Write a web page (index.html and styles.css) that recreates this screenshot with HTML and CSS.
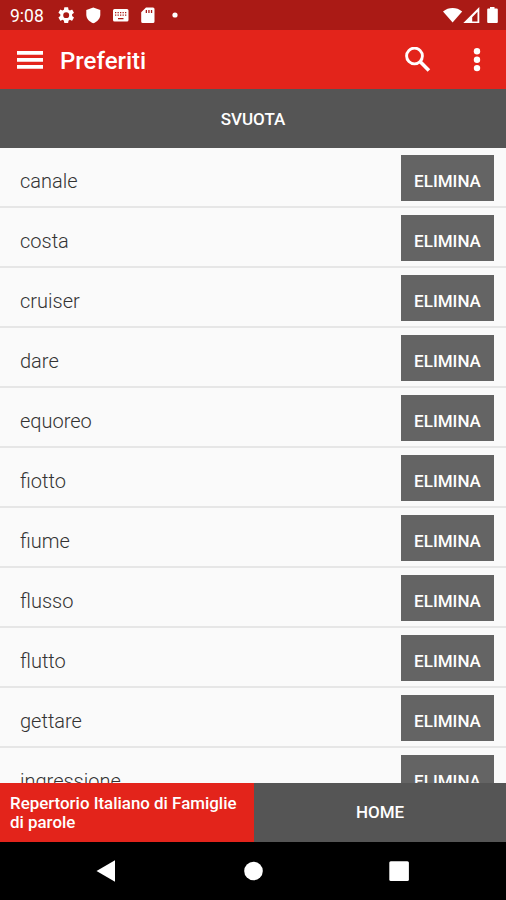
FILE: index.html
```html
<!DOCTYPE html>
<html lang="it">
<head>
<meta charset="utf-8">
<title>Preferiti</title>
<link rel="stylesheet" href="styles.css">
</head>
<body>
<div class="screen">
  <div class="status">
    <span class="clock">9:08</span>
    <svg class="notifications" width="124" height="20" viewBox="56 0 124 20" fill="#fff">
      <g transform="translate(56.3 5.2) scale(.825)"><path d="M19.14 12.94c.04-.3.06-.61.06-.94s-.02-.64-.07-.94l2.03-1.58a.5.5 0 0 0 .12-.61l-1.92-3.32a.5.5 0 0 0-.59-.22l-2.39.96a7 7 0 0 0-1.62-.94l-.36-2.54a.5.5 0 0 0-.48-.41h-3.84a.5.5 0 0 0-.47.41l-.36 2.54c-.59.24-1.13.57-1.62.94l-2.39-.96a.5.5 0 0 0-.59.22L2.74 8.87a.5.5 0 0 0 .12.61l2.03 1.58a7 7 0 0 0 0 1.88l-2.03 1.58a.5.5 0 0 0-.12.61l1.92 3.32c.12.22.37.29.59.22l2.39-.96c.5.38 1.03.7 1.62.94l.36 2.54c.05.24.24.41.48.41h3.84c.24 0 .44-.17.47-.41l.36-2.54a7 7 0 0 0 1.62-.94l2.39.96c.22.08.47 0 .59-.22l1.92-3.32a.5.5 0 0 0-.12-.61zM12 15.6a3.6 3.6 0 1 1 0-7.2 3.6 3.6 0 0 1 0 7.2z" transform="translate(0 -6)"/></g>
      <path d="M93.300 2.500l7 2.600v4.400c0 4.200-3 7.200-7 8.800-4-1.600-7-4.600-7-8.800V5.100z"/>
      <path fill-rule="evenodd" d="M114.500 4h12.500a1.500 1.500 0 0 1 1.500 1.500v9.500a1.500 1.500 0 0 1-1.500 1.500h-12.500a1.500 1.500 0 0 1-1.500-1.500V5.500a1.500 1.500 0 0 1 1.500-1.500zM115 7v1.300h1.300V7zm2.500 0v1.300h1.300V7zm2.500 0v1.300h1.300V7zm2.500 0v1.300h1.300V7zm2.500 0v1.300h1.300V7zM115 9.500v1.300h1.300V9.500zm2.500 0v1.300h1.300V9.500zm2.500 0v1.300h1.300V9.500zm2.500 0v1.300h1.300V9.500zm2.500 0v1.300h1.300V9.500zM118 13v1.300h5.500V13z"/>
      <path fill-rule="evenodd" d="M146 2.500h7a1.500 1.500 0 0 1 1.500 1.500v12.500a1.500 1.500 0 0 1-1.500 1.500h-10.300a1.500 1.500 0 0 1-1.500-1.500V7.300zM145.700 5v3h1.300V5zm2.600 0v3h1.300V5zm2.600 0v3h1.300V5z"/>
      <circle cx="175" cy="10" r="2.600"/>
    </svg>
    <svg class="system" width="58" height="20" viewBox="442 0 58 20" fill="#fff">
      <path d="M443 6.500c5.800-4.600 13.400-4.600 19.200 0L452.600 17.500z"/>
      <path fill-rule="evenodd" d="M479.300 2v16h-16zM477.500 6.800l-5.300 5.400v4.300h5.300z"/>
      <path d="M490 3.500V2h4.500v1.500h2.300a1 1 0 0 1 1 1V17a1 1 0 0 1-1 1h-8.600a1 1 0 0 1-1-1V4.500a1 1 0 0 1 1-1z"/>
    </svg>
  </div>
  <header class="bar">
    <svg class="menu" width="26" height="20" viewBox="0 0 26 20" fill="#fff"><path d="M0 1h26v3.700H0zM0 8h26v3.700H0zM0 15h26v3.700H0z"/></svg>
    <h1>Preferiti</h1>
    <svg class="search" width="26" height="26" viewBox="0 0 26 26" fill="none" stroke="#fff"><circle cx="9.500" cy="9" r="7.900" stroke-width="2.900"/><path d="M15 14.500l8.900 8.900" stroke-width="3.600"/></svg>
    <svg class="more" width="8" height="26" viewBox="0 0 8 26" fill="#fff"><circle cx="4" cy="4.300" r="3.200"/><circle cx="4" cy="12.700" r="3.200"/><circle cx="4" cy="21.100" r="3.200"/></svg>
  </header>
  <button class="clear">SVUOTA</button>
  <ul class="list">
    <li><span>canale</span><button>ELIMINA</button></li>
    <li><span>costa</span><button>ELIMINA</button></li>
    <li><span>cruiser</span><button>ELIMINA</button></li>
    <li><span>dare</span><button>ELIMINA</button></li>
    <li><span>equoreo</span><button>ELIMINA</button></li>
    <li><span>fiotto</span><button>ELIMINA</button></li>
    <li><span>fiume</span><button>ELIMINA</button></li>
    <li><span>flusso</span><button>ELIMINA</button></li>
    <li><span>flutto</span><button>ELIMINA</button></li>
    <li><span>gettare</span><button>ELIMINA</button></li>
    <li><span>ingressione</span><button>ELIMINA</button></li>
  </ul>
  <footer class="footer">
    <div class="app-name">Repertorio Italiano di Famiglie<br>di parole</div>
    <button class="home">HOME</button>
  </footer>
  <nav class="nav">
    <svg width="506" height="58" viewBox="0 0 506 58" fill="#fff"><path d="M96.500 29L115 18.300v21.400z"/><circle cx="253.500" cy="29" r="9.300"/><rect x="389.300" y="19.300" width="19.600" height="19.600" rx="1.500"/></svg>
  </nav>
</div>
</body>
</html>
```
FILE: styles.css
```css
* { box-sizing: border-box; }
body { margin: 0; font-family: Roboto, "Liberation Sans", sans-serif; }
button { border: 0; padding: 0; color: #fff; font: 500 17px/20px Roboto, sans-serif; }
svg { display: block; flex: none; }
.screen { width: 506px; height: 900px; display: flex; flex-direction: column; overflow: hidden; background: #fafafa; }
.status { height: 30px; flex: none; display: flex; padding: 5px 6px 0 10px; background: #aa1a15; color: #fff; }
.clock { width: 46px; font-size: 17.500px; line-height: 22px; }
.system { margin-left: auto; }
.bar { height: 59px; flex: none; display: flex; align-items: center; padding: 0 25px 0 17px; background: #e3241b; color: #fff; }
.bar h1 { margin: 2px 0 0 17px; font-size: 24px; font-weight: 500; line-height: 28px; }
.search { margin-left: auto; }
.more { margin-left: 42px; }
.clear { height: 59px; flex: none; background: #555; }
.list { flex: 1; min-height: 0; overflow: hidden; margin: 0; padding: 0; list-style: none; }
.list li { height: 60px; display: flex; justify-content: space-between; align-items: flex-start; padding: 7px 12px 0 20px; border-bottom: 2px solid #e6e6e6; }
.list span { padding-top: 14px; color: #333; font-size: 20px; font-weight: 300; line-height: 25px; }
.list button { width: 93px; height: 46px; padding-top: 5px; background: #646464; }
.footer { height: 59px; flex: none; display: flex; color: #fff; }
.app-name { width: 254px; padding: 11px 10px 0; background: #e3241b; font-size: 16.900px; font-weight: 500; line-height: 19px; white-space: nowrap; }
.home { flex: 1; padding-bottom: 1px; background: #555; }
.nav { height: 58px; flex: none; background: #000; }
```
